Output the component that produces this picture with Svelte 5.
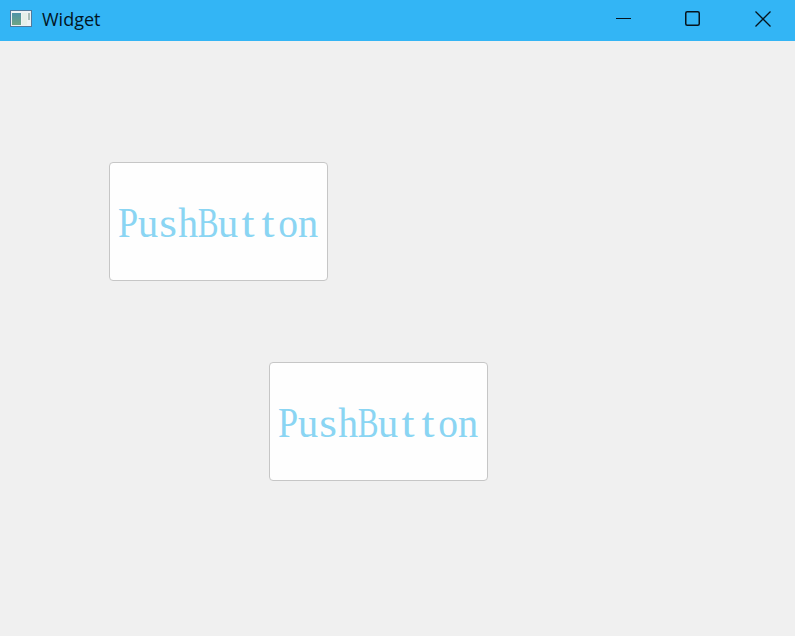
<script>
  // horizontal fit of each glyph into its fixed 20px cell
  const fit = { P: 0.86, u: 0.96, s: 1.08, h: 0.94, B: 0.74, t: 1.12, o: 0.94, n: 0.96 };
  const chars = [...'PushButton'];
  const buttons = [{ col: 'first' }, { col: 'second' }];
</script>

<div class="window">
  <header class="titlebar">
    <svg class="appicon" width="22" height="18" viewBox="0 0 22 18">
      <defs>
        <linearGradient id="pane" x1="0" y1="0" x2="0" y2="1">
          <stop offset="0" stop-color="#4f93a8" />
          <stop offset="1" stop-color="#6fa583" />
        </linearGradient>
      </defs>
      <rect x="0.5" y="0.5" width="21" height="16" fill="#eef2f4" stroke="#4f7a9c" />
      <rect x="2" y="3" width="9" height="12" fill="url(#pane)" />
      <rect x="12" y="3" width="5" height="12" fill="#e6efe9" />
      <rect x="18" y="3" width="2" height="7" fill="#a9bdb9" />
    </svg>
    <span class="title">Widget</span>
    <div class="controls">
      <span class="ctl min"><svg width="16" height="16" viewBox="0 0 16 16"><path d="M0 7.5H15" stroke="#06141d" fill="none" /></svg></span>
      <span class="ctl max"><svg width="16" height="16" viewBox="0 0 16 16"><rect x="0.75" y="0.75" width="13.5" height="13.5" rx="1.5" stroke="#06141d" stroke-width="1.5" fill="none" /></svg></span>
      <span class="ctl close"><svg width="16" height="16" viewBox="0 0 16 16"><path d="M0.5 0.5L15.5 15.5M15.5 0.5L0.5 15.5" stroke="#06141d" stroke-width="1.3" fill="none" /></svg></span>
    </div>
  </header>
  <main class="content">
    {#each buttons as b}
      <button class="push {b.col}">
        {#each chars as c}
          <span class="cell" style="--fit: {fit[c]}">{c}</span>
        {/each}
      </button>
    {/each}
  </main>
</div>

<style>
  :global(body) { margin: 0; }
  .window {
    width: 795px;
    height: 636px;
    display: flex;
    flex-direction: column;
    background: #f0f0f0;
    overflow: hidden;
  }
  .titlebar {
    height: 41px;
    flex: none;
    background: #33b5f5;
    display: flex;
    align-items: center;
    padding-left: 10px;
    box-sizing: border-box;
  }
  .appicon { margin-top: -4px; }
  .title {
    margin-left: 10px;
    font: 18px "Open Sans", "Liberation Sans", sans-serif;
    color: #02141f;
    margin-top: -3px;
  }
  .controls {
    margin-left: auto;
    display: flex;
    margin-top: -3px;
    padding-right: 24px;
    gap: 54px;
  }
  .ctl { display: block; height: 16px; }
  .min { margin-left: 1px; margin-right: -1px; }
  .content {
    flex: 1;
    display: grid;
    grid-template-columns: 109px 160px 59px 1fr;
    grid-template-rows: 121px 119px 81px 119px 1fr;
  }
  .push {
    box-sizing: border-box;
    width: 219px;
    height: 119px;
    padding: 0 2px 0 0;
    background: #fefefe;
    border: 1px solid #c6c6c6;
    border-radius: 4px;
    display: flex;
    justify-content: center;
    align-items: center;
    font-family: "Liberation Serif", serif;
    font-size: 42px;
    color: #8ad5f3;
  }
  .first { grid-column: 2 / 4; grid-row: 2; }
  .second { grid-column: 3 / 5; grid-row: 4; }
  .cell {
    display: flex;
    justify-content: center;
    width: 20px;
    line-height: 40px;
    margin-top: 2px;
    transform: scaleX(var(--fit));
  }
</style>
